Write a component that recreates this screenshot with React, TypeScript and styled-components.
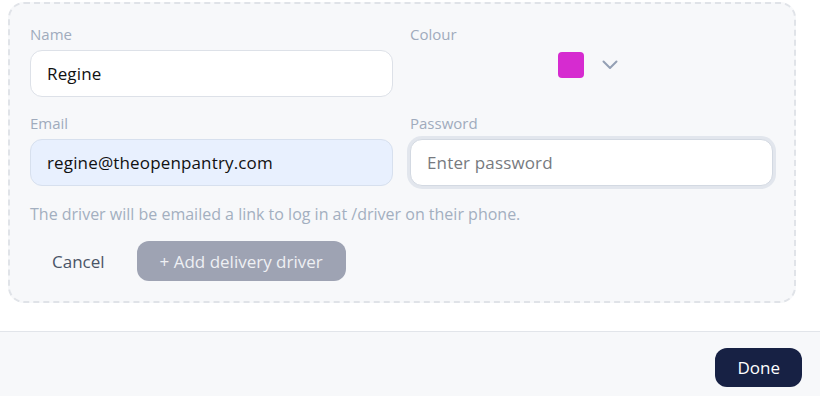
import React from "react";
import styled, { createGlobalStyle } from "styled-components";

const GlobalStyle = createGlobalStyle`
  html, body {
    margin: 0;
    padding: 0;
    background: #ffffff;
    font-family: "Open Sans", "Noto Sans", Arial, sans-serif;
    overflow: hidden;
  }
  * { box-sizing: border-box; }
`;

const Page = styled.div`
  display: flex;
  flex-direction: column;
  min-height: 100vh;
`;

const Body = styled.div`
  padding: 2px 24px 0 8px;
`;

const Card = styled.form`
  border: 2px dashed #e0e3e8;
  border-radius: 16px;
  background: #f7f8fa;
  padding: 20px 21px 20px 20px;
`;

const Grid = styled.div`
  display: grid;
  grid-template-columns: 1fr 1fr;
  column-gap: 17px;
  row-gap: 16px;
`;

const Field = styled.div`
  display: flex;
  flex-direction: column;
`;

const Label = styled.label`
  font-size: 15px;
  line-height: 20px;
  color: #a0abbd;
  margin-bottom: 6px;
`;

const Input = styled.input<{ $autofill?: boolean; $focused?: boolean }>`
  height: 47px;
  width: 100%;
  border-radius: 12px;
  border: 1px solid ${(p) => (p.$autofill ? "#d7e0ee" : p.$focused ? "#d3d9e2" : "#dde1e8")};
  background: ${(p) => (p.$autofill ? "#e8f0fe" : "#ffffff")};
  box-shadow: ${(p) => (p.$focused ? "0 0 0 3px #e2e6ed" : "none")};
  padding: 0 16px;
  font-family: inherit;
  font-size: 17px;
  letter-spacing: 0.15px;
  color: #111111;
  outline: none;
  &::placeholder {
    color: #777a80;
  }
`;

const ColourButton = styled.button`
  display: flex;
  align-items: center;
  justify-content: center;
  gap: 14px;
  height: 30px;
  padding: 0 3px 0 0;
  border: none;
  background: transparent;
  cursor: pointer;
`;

const Swatch = styled.span<{ $color: string }>`
  width: 26px;
  height: 26px;
  border-radius: 4px;
  background: ${(p) => p.$color};
`;

const Chevron = styled.span`
  width: 24px;
  height: 24px;
  display: flex;
  align-items: center;
  justify-content: center;
`;

const Helper = styled.p`
  margin: 18px 0 0;
  font-size: 16px;
  line-height: 20px;
  color: #a3afc0;
`;

const Actions = styled.div`
  display: flex;
  align-items: center;
  gap: 10px;
  margin-top: 17px;
`;

const Button = styled.button<{ $variant: "ghost" | "muted" | "primary" }>`
  height: ${(p) => (p.$variant === "primary" ? "39px" : "40px")};
  padding: 0 ${(p) => (p.$variant === "muted" ? "23px" : "22px")};
  border-radius: 12px;
  border: none;
  font-family: inherit;
  font-size: 17px;
  cursor: pointer;
  background: ${(p) =>
    p.$variant === "ghost" ? "transparent" : p.$variant === "muted" ? "#9ea3b3" : "#172144"};
  color: ${(p) =>
    p.$variant === "ghost" ? "#4a5466" : p.$variant === "muted" ? "#eef0f4" : "#ffffff"};
`;

const Footer = styled.div`
  margin-top: auto;
  border-top: 1px solid #e2e5ea;
  background: #f7f8fa;
  display: flex;
  justify-content: flex-end;
  padding: 16px 18px 9px;
`;

export default function App() {
  return (
    <>
      <GlobalStyle />
      <Page>
        <Body>
          <Card onSubmit={(e) => e.preventDefault()}>
            <Grid>
              <Field>
                <Label>Name</Label>
                <Input defaultValue="Regine" />
              </Field>
              <Field>
                <Label>Colour</Label>
                <ColourButton type="button">
                  <Swatch $color="#d62bd0" />
                  <Chevron>
                    <svg width="16" height="10" viewBox="0 0 16 10" fill="none">
                      <path d="M1.5 1.5 L8 8 L14.5 1.5" stroke="#94a0b4" strokeWidth="2" strokeLinecap="round" strokeLinejoin="round" />
                    </svg>
                  </Chevron>
                </ColourButton>
              </Field>
              <Field>
                <Label>Email</Label>
                <Input $autofill defaultValue="regine@theopenpantry.com" />
              </Field>
              <Field>
                <Label>Password</Label>
                <Input $focused type="password" placeholder="Enter password" />
              </Field>
            </Grid>
            <Helper>The driver will be emailed a link to log in at /driver on their phone.</Helper>
            <Actions>
              <Button type="button" $variant="ghost">Cancel</Button>
              <Button type="submit" $variant="muted">+ Add delivery driver</Button>
            </Actions>
          </Card>
        </Body>
        <Footer>
          <Button type="button" $variant="primary">Done</Button>
        </Footer>
      </Page>
    </>
  );
}
